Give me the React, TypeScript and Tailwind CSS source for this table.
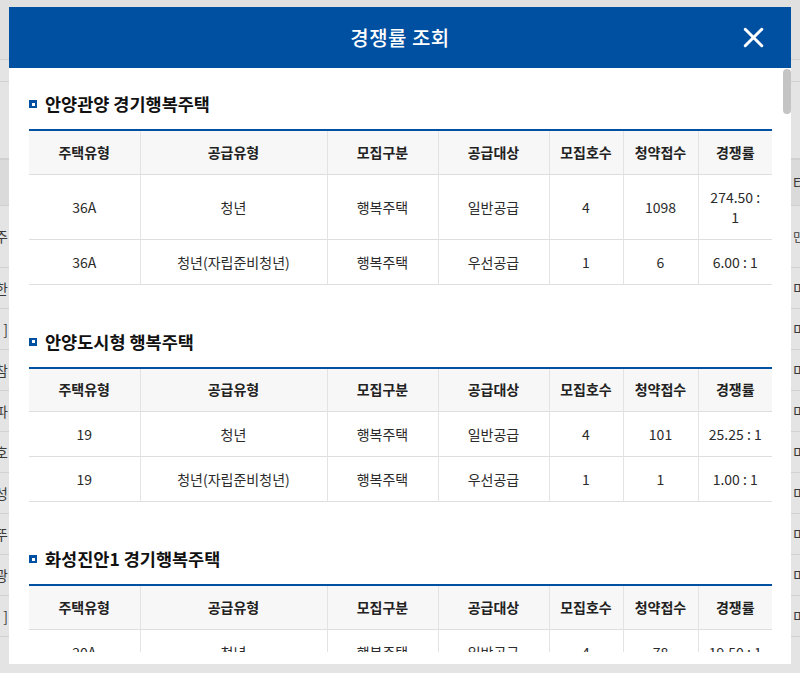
import { X } from "lucide-react"

type Row = {
  type: string
  supply: string
  kind: string
  target: string
  units: string
  applied: string
  ratio: string
}

const sections: { title: string; rows: Row[] }[] = [
  {
    title: "안양관양 경기행복주택",
    rows: [
      { type: "36A", supply: "청년", kind: "행복주택", target: "일반공급", units: "4", applied: "1098", ratio: "274.50 : 1" },
      { type: "36A", supply: "청년(자립준비청년)", kind: "행복주택", target: "우선공급", units: "1", applied: "6", ratio: "6.00 : 1" },
    ],
  },
  {
    title: "안양도시형 행복주택",
    rows: [
      { type: "19", supply: "청년", kind: "행복주택", target: "일반공급", units: "4", applied: "101", ratio: "25.25 : 1" },
      { type: "19", supply: "청년(자립준비청년)", kind: "행복주택", target: "우선공급", units: "1", applied: "1", ratio: "1.00 : 1" },
    ],
  },
  {
    title: "화성진안1 경기행복주택",
    rows: [
      { type: "20A", supply: "청년", kind: "행복주택", target: "일반공급", units: "4", applied: "78", ratio: "19.50 : 1" },
    ],
  },
]

const headers = ["주택유형", "공급유형", "모집구분", "공급대상", "모집호수", "청약접수", "경쟁률"]
const widths = [111, 187, 111, 111, 74, 75, 74]

// page behind the dialog (dimmed)
const bgRows = [
  ["한", "미"],
  ["]", "미"],
  ["참", "미"],
  ["파", "미"],
  ["호", "미"],
  ["성", "미"],
  ["뚜", "미"],
  ["광", "미"],
  ["]", "미"],
  ["", ""],
]

function Section({ title, rows, first }: { title: string; rows: Row[]; first?: boolean }) {
  return (
    <div className={first ? "" : "mt-[45px]"}>
      <div className="flex items-center gap-[8px] h-[24px] mb-[13px]">
        <div className="w-[8px] h-[8px] bg-[#0050a2] flex items-center justify-center">
          <div className="w-[3px] h-[3px] bg-white" />
        </div>
        <h2 className="text-[17.5px] font-bold text-[#111] leading-[24px]">{title}</h2>
      </div>
      <table className="w-[743px] table-fixed border-collapse border-t-2 border-[#0050a2] text-[14px]">
        <colgroup>
          {widths.map((w, i) => (
            <col key={i} style={{ width: w }} />
          ))}
        </colgroup>
        <thead>
          <tr className="bg-[#f7f7f7] border-b border-[#dedede]">
            {headers.map((h, i) => (
              <th
                key={h}
                className={`h-[44px] font-bold text-[#222] text-center ${i > 0 ? "border-l border-[#e3e3e3]" : ""}`}
              >
                {h}
              </th>
            ))}
          </tr>
        </thead>
        <tbody>
          {rows.map((r, i) => (
            <tr key={i} className="border-b border-[#dedede]">
              {[r.type, r.supply, r.kind, r.target, r.units, r.applied, r.ratio].map((v, j) => (
                <td
                  key={j}
                  className={`px-[8px] py-[12px] leading-[20px] text-center text-[#2b2b2b] ${j > 0 ? "border-l border-[#e3e3e3]" : ""}`}
                >
                  {v}
                </td>
              ))}
            </tr>
          ))}
        </tbody>
      </table>
    </div>
  )
}

export default function App() {
  return (
    <div
      className="relative w-[800px] h-[673px] overflow-hidden bg-[#e4e4e4]"
      style={{ fontFamily: '"Noto Sans CJK KR", "Noto Sans", sans-serif' }}
    >
      {/* background page */}
      <div className="flex flex-col text-[14px] text-[#3a3a3a]">
        <div className="h-[60px] border-b border-[#d2d2d2] bg-[#e0e0e0]" />
        <div className="h-[22px] border-b border-[#d2d2d2]" />
        <div className="h-[76px]" />
        <div className="h-[48px] border-t-2 border-[#4e78a8] border-b border-[#d0d0d0] bg-[#dadada] flex items-center justify-end">
          <span className="w-[7px] overflow-hidden whitespace-nowrap">타</span>
        </div>
        <div className="h-[62px] border-b border-[#d2d2d2] flex items-center justify-between">
          <span className="w-[8px] overflow-hidden whitespace-nowrap flex justify-end">주</span>
          <span className="w-[7px] overflow-hidden whitespace-nowrap text-[12px]">민</span>
        </div>
        {bgRows.map(([l, r], i) => (
          <div key={i} className="h-[41px] border-b border-[#d2d2d2] flex items-center justify-between">
            <span className="w-[8px] overflow-hidden whitespace-nowrap flex justify-end">{l}</span>
            <span className="w-[7px] overflow-hidden whitespace-nowrap">{r}</span>
          </div>
        ))}
      </div>

      {/* dialog */}
      <div className="absolute left-[9px] top-[7px] w-[782px] h-[657px] bg-white flex flex-col">
        <div className="h-[61px] shrink-0 bg-[#0050a2] flex items-center justify-center relative">
          <h1 className="text-[20px] font-medium text-white tracking-[0.5px]">경쟁률 조회</h1>
          <button className="absolute right-[21px] top-[14px] text-white">
            <X size={33} strokeWidth={2.2} />
          </button>
        </div>
        <div className="flex flex-1 min-h-0">
          <div className="flex-1 overflow-hidden pl-[20px] pr-[11px] pt-[24px] mb-[12px]">
            {sections.map((s, i) => (
              <Section key={s.title} title={s.title} rows={s.rows} first={i === 0} />
            ))}
          </div>
          <div className="w-[8px] shrink-0 pt-[1px]">
            <div className="h-[45px] rounded-[4px] bg-[#c4c4c4]" />
          </div>
        </div>
      </div>
    </div>
  )
}
